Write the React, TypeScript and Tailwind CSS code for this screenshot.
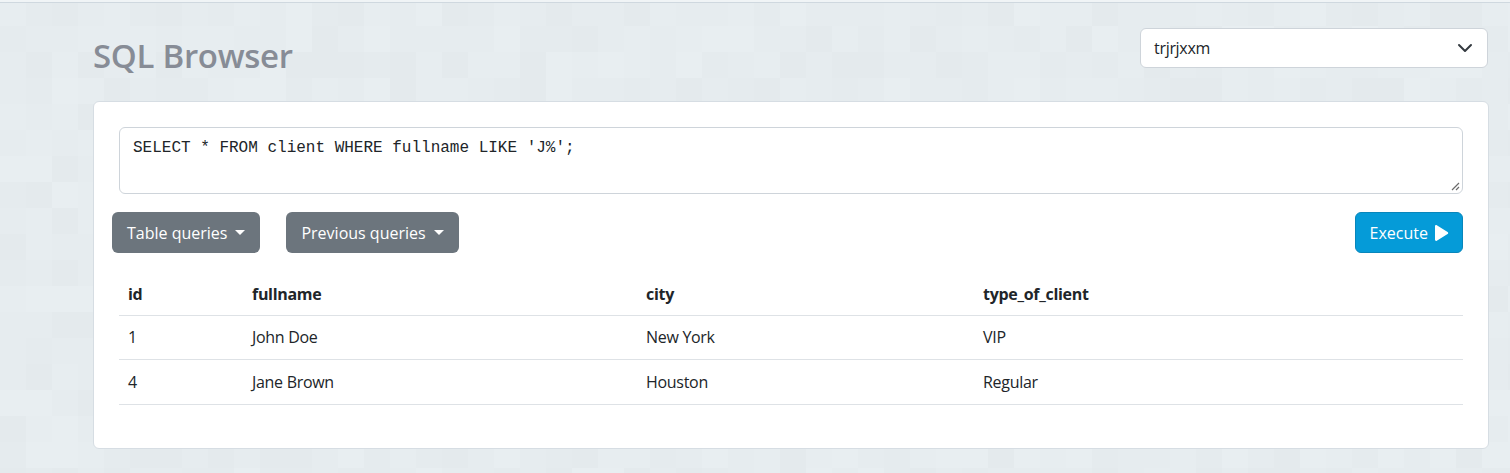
import React from "react";

function Pattern() {
  const tiles: React.ReactNode[] = [];
  const shades = ["#e4eaed", "#e6ecef", "#e7edf0", "#e5ebee", "#e8eef1", "#e6ecef"];
  let seed = 7;
  const rnd = () => {
    seed = (seed * 9301 + 49297) % 233280;
    return seed / 233280;
  };
  for (let r = 0; r < 19; r++) {
    for (let c = 0; c < 59; c++) {
      const s = shades[Math.floor(rnd() * shades.length)];
      tiles.push(<rect key={r + "-" + c} x={c * 26} y={r * 26} width={26} height={26} fill={s} />);
    }
  }
  return (
    <svg className="absolute inset-0 h-full w-full" width="1510" height="473" aria-hidden>
      {tiles}
    </svg>
  );
}

function Chevron() {
  return (
    <svg width="16" height="16" viewBox="0 0 16 16" fill="none">
      <path d="M2 5l6 6 6-6" stroke="#343a40" strokeWidth="2" strokeLinecap="round" strokeLinejoin="round" />
    </svg>
  );
}

function Caret() {
  return <span className="ml-[8px] inline-block h-0 w-0 border-x-[5px] border-t-[5px] border-x-transparent border-t-white align-middle" />;
}

const rows = [
  { id: "1", fullname: "John Doe", city: "New York", type: "VIP", h: "h-[44px]" },
  { id: "4", fullname: "Jane Brown", city: "Houston", type: "Regular", h: "h-[45px]" },
];

export default function App() {
  return (
    <div
      className="relative h-[473px] w-[1510px] overflow-hidden bg-[#e6ecef] text-[#212529]"
      style={{ fontFamily: '"Open Sans", "Noto Sans", sans-serif' }}
    >
      <Pattern />
      <div className="absolute left-0 right-0 top-0 h-[2px] bg-[#f0f4f6]" />
      <div className="absolute left-0 right-0 top-[2px] h-px bg-[#cfd8df]" />
      <div className="relative pl-[93px] pr-[21px]">
        <div className="flex h-[101px] items-start justify-between">
          <h1 className="mt-[34px] text-[33px] font-semibold leading-[44px] tracking-[-0.3px] text-[#878c96]">
            SQL Browser
          </h1>
          <div className="mr-[1px] mt-[28px] flex h-[40px] w-[348px] items-center justify-between rounded-[6px] border border-[#ced4da] bg-white pl-[13px] pr-[14px] text-[16px] text-[#212529]">
            <span className="tracking-[-0.3px]">trjrjxxm</span>
            <Chevron />
          </div>
        </div>
        <div className="rounded-[6px] border border-[#d6dde3] bg-white pb-[43px] pl-[25px] pr-[25px] pt-[25px]">
          <div className="relative h-[67px] rounded-[6px] border border-[#ced4da] bg-white px-[13px] pt-[6px]">
            <span className="text-[16px] leading-[20px] text-[#212529]" style={{ fontFamily: '"Liberation Mono", monospace' }}>
              SELECT * FROM client WHERE fullname LIKE 'J%';
            </span>
            <svg className="absolute bottom-[2px] right-[2px]" width="10" height="10" viewBox="0 0 10 10">
              <path d="M9 2L2 9M9 6L6 9" stroke="#6b6b6b" strokeWidth="1.2" />
            </svg>
          </div>
          <div className="ml-[-7px] mt-[18px] flex items-center">
            <button className="flex h-[41px] items-center rounded-[6px] bg-[#6c757d] pl-[15px] pr-[15px] text-[16px] text-white">
              Table queries
              <Caret />
            </button>
            <button className="ml-[26px] flex h-[41px] items-center rounded-[6px] bg-[#6c757d] pl-[15px] pr-[15px] text-[16px] text-white">
              Previous queries
              <Caret />
            </button>
            <button className="ml-auto flex h-[41px] items-center rounded-[6px] border border-[#0886bb] bg-[#059bd8] pl-[14px] pr-[13px] text-[16px] text-white">
              Execute
              <svg className="ml-[4px]" width="17" height="18" viewBox="0 0 17 18">
                <path d="M3 2.2c0-1 1-1.5 1.8-1L15.6 7.9c0.8 0.5 0.8 1.7 0 2.2L4.8 16.8c-0.8 0.5-1.8 0-1.8-1z" fill="white" />
              </svg>
            </button>
          </div>
          <table className="mt-[20px] w-full border-collapse text-left text-[16px]">
            <colgroup>
              <col className="w-[124px]" />
              <col className="w-[394px]" />
              <col className="w-[337px]" />
              <col />
            </colgroup>
            <thead>
              <tr className="border-b border-[#dee2e6]">
                <th className="h-[42px] px-[9px] font-bold tracking-[-0.3px]">id</th>
                <th className="px-[9px] font-bold tracking-[-0.3px]">fullname</th>
                <th className="px-[9px] font-bold tracking-[-0.3px]">city</th>
                <th className="px-[9px] font-bold tracking-[-0.3px]">type_of_client</th>
              </tr>
            </thead>
            <tbody>
              {rows.map((r) => (
                <tr key={r.id} className="border-b border-[#dee2e6]">
                  <td className={`${r.h} px-[9px] tracking-[-0.3px]`}>{r.id}</td>
                  <td className="px-[9px] tracking-[-0.3px]">{r.fullname}</td>
                  <td className="px-[9px] tracking-[-0.3px]">{r.city}</td>
                  <td className="px-[9px] tracking-[-0.3px]">{r.type}</td>
                </tr>
              ))}
            </tbody>
          </table>
        </div>
      </div>
    </div>
  );
}
